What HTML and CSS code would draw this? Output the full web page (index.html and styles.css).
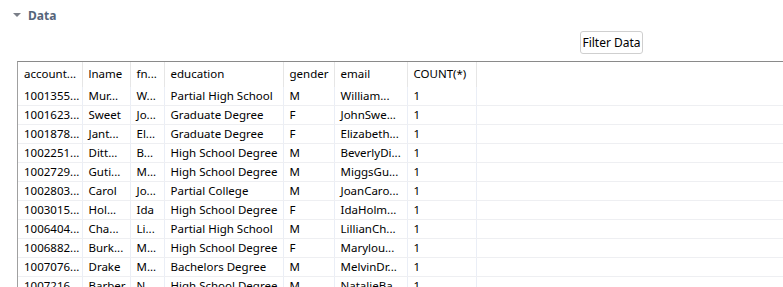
FILE: index.html
```html
<!DOCTYPE html>
<html>
<head>
<meta charset="utf-8">
<link rel="stylesheet" href="styles.css">
</head>
<body>
<div class="section-head">
  <span class="caret"></span>
  <span class="section-title">Data</span>
</div>
<div class="toolbar">
  <button class="btn">Filter Data</button>
</div>
<div class="grid-wrap">
<table class="grid">
  <colgroup>
    <col class="c1"><col class="c2"><col class="c3"><col class="c4"><col class="c5"><col class="c6"><col class="c7"><col>
  </colgroup>
  <thead>
    <tr><th>account...</th><th>lname</th><th>fn...</th><th>education</th><th>gender</th><th>email</th><th>COUNT(*)</th><th class="fill"></th></tr>
  </thead>
  <tbody>
    <tr><td>1001355...</td><td>Mur...</td><td>W...</td><td>Partial High School</td><td>M</td><td>William...</td><td>1</td><td class="fill"></td></tr>
    <tr><td>1001623...</td><td>Sweet</td><td>Jo...</td><td>Graduate Degree</td><td>F</td><td>JohnSwe...</td><td>1</td><td class="fill"></td></tr>
    <tr><td>1001878...</td><td>Jant...</td><td>El...</td><td>Graduate Degree</td><td>F</td><td>Elizabeth...</td><td>1</td><td class="fill"></td></tr>
    <tr><td>1002251...</td><td>Ditt...</td><td>B...</td><td>High School Degree</td><td>M</td><td>BeverlyDi...</td><td>1</td><td class="fill"></td></tr>
    <tr><td>1002729...</td><td>Guti...</td><td>M...</td><td>High School Degree</td><td>M</td><td>MiggsGu...</td><td>1</td><td class="fill"></td></tr>
    <tr><td>1002803...</td><td>Carol</td><td>Jo...</td><td>Partial College</td><td>M</td><td>JoanCaro...</td><td>1</td><td class="fill"></td></tr>
    <tr><td>1003015...</td><td>Hol...</td><td>Ida</td><td>High School Degree</td><td>F</td><td>IdaHolm...</td><td>1</td><td class="fill"></td></tr>
    <tr><td>1006404...</td><td>Cha...</td><td>Li...</td><td>Partial High School</td><td>M</td><td>LillianCh...</td><td>1</td><td class="fill"></td></tr>
    <tr><td>1006882...</td><td>Burk...</td><td>M...</td><td>High School Degree</td><td>F</td><td>Marylou...</td><td>1</td><td class="fill"></td></tr>
    <tr><td>1007076...</td><td>Drake</td><td>M...</td><td>Bachelors Degree</td><td>M</td><td>MelvinDr...</td><td>1</td><td class="fill"></td></tr>
    <tr><td>1007216...</td><td>Barber</td><td>N...</td><td>High School Degree</td><td>M</td><td>NatalieBa...</td><td>1</td><td class="fill"></td></tr>
  </tbody>
</table>
</div>
</body>
</html>
```
FILE: styles.css
```css
html, body {
  margin: 0;
  padding: 0;
  background: #ffffff;
  overflow: hidden;
  height: 287px;
}
body {
  font-family: "Noto Sans", "Open Sans", sans-serif;
  font-size: 12px;
  color: #000;
}
.section-head {
  display: flex;
  align-items: center;
  height: 30px;
  padding-left: 13px;
}
.caret {
  width: 0;
  height: 0;
  border-left: 4px solid transparent;
  border-right: 4px solid transparent;
  border-top: 4px solid #7a7f88;
  margin-right: 7px;
}
.section-title {
  font-weight: bold;
  font-size: 12px;
  color: #56657a;
}
.toolbar {
  display: flex;
  justify-content: flex-end;
  padding-right: 140px;
  height: 30px;
  align-items: flex-start;
  margin-top: 1px;
}
.btn {
  font-family: "Noto Sans", "Open Sans", sans-serif;
  font-size: 12px;
  color: #000;
  background: #fff;
  border: 1px solid #cfcfcf;
  border-radius: 3px;
  height: 23px;
  width: 63px;
  padding: 0;
  line-height: 20px;
}
.grid-wrap {
  margin-left: 17px;
  border-left: 1px solid #a0a0a0;
  border-top: 1px solid #8a8a8a;
  height: 300px;
}
.grid {
  border-collapse: collapse;
  table-layout: fixed;
  width: 100%;
  font-size: 11.5px;
}
.c1 { width: 64px; }
.c2 { width: 48px; }
.c3 { width: 34px; }
.c4 { width: 119px; }
.c5 { width: 51px; }
.c6 { width: 73px; }
.c7 { width: 69px; }
.grid th, .grid td {
  text-align: left;
  font-weight: normal;
  white-space: nowrap;
  overflow: hidden;
  padding: 0 0 0 6px;
  border-right: 1px solid #e6e6e6;
}
.grid th {
  height: 23px;
  padding-bottom: 2px;
  color: #000;
}
.grid td {
  height: 16px;
  padding-bottom: 2px;
  border-bottom: 1px solid #eeeff2;
  border-right-color: #eaeef6;
}
.grid .fill {
  border-right: none;
}
```
